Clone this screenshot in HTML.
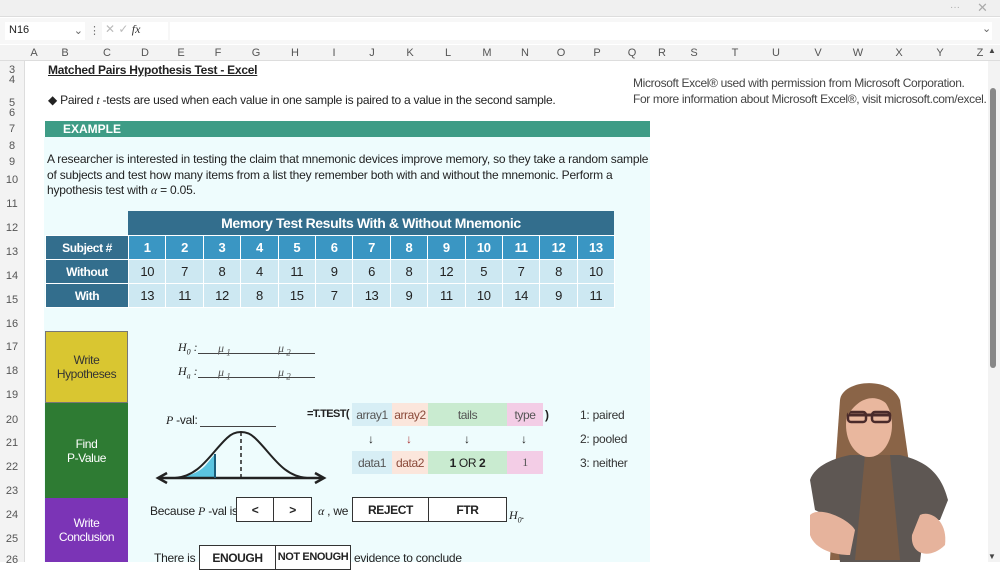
<!DOCTYPE html>
<html><head><meta charset="utf-8"><style>
*{margin:0;padding:0;box-sizing:border-box}
body{width:1000px;height:562px;overflow:hidden;background:#fff;font-family:"Liberation Sans Narrow","Liberation Sans",Arial,sans-serif;position:relative;color:#222}
.a{position:absolute;white-space:nowrap}
.n{letter-spacing:-0.25px}
.rn{position:absolute;left:0;width:24px;text-align:center;font-size:11px;color:#555}
.ch{position:absolute;top:47px;font-size:11px;color:#555;transform:translateX(-50%)}
.c{position:absolute;display:flex;align-items:center;justify-content:center;text-align:center;white-space:nowrap;letter-spacing:-0.4px}
.tb{table-layout:fixed}
.tb td{border:1px solid #fff;text-align:center;font-size:13px;letter-spacing:-0.4px;overflow:hidden}
</style></head><body>
<div class="a" style="left:0;top:0;width:1000px;height:17px;background:#f0f0f0;border-bottom:1px solid #ddd"></div>
<div class="a" style="left:950px;top:2px;font-size:10px;color:#aaa">···</div>
<div class="a" style="left:977px;top:0px;font-size:13px;color:#aaa">✕</div>
<div class="a" style="left:0;top:18px;width:1000px;height:26px;background:#f7f7f7"></div>
<div class="a" style="left:5px;top:22px;width:80px;height:18px;background:#fff;font-size:11px;padding:2px 4px">N16<span style="position:absolute;right:2px;color:#666">⌄</span></div>
<div class="a" style="left:89px;top:24px;font-size:11px;color:#777">⋮</div>
<div class="a" style="left:102px;top:22px;width:66px;height:18px;background:#fff;font-size:12px;color:#bbb;padding-left:3px">✕ ✓ <i style="font-family:'Liberation Serif';color:#333">fx</i></div>
<div class="a" style="left:170px;top:22px;width:822px;height:18px;background:#fff"></div>
<div class="a" style="left:982px;top:22px;font-size:11px;color:#666">⌄</div>
<div class="a" style="left:0;top:45px;width:1000px;height:16px;background:#f3f3f3;border-bottom:1px solid #ddd"></div>
<div class="a" style="left:0;top:61px;width:25px;height:501px;background:#f3f3f3;border-right:1px solid #ddd"></div>
<div class="ch" style="left:34px">A</div><div class="ch" style="left:65px">B</div><div class="ch" style="left:107px">C</div><div class="ch" style="left:145px">D</div><div class="ch" style="left:181px">E</div><div class="ch" style="left:218px">F</div><div class="ch" style="left:256px">G</div><div class="ch" style="left:295px">H</div><div class="ch" style="left:334px">I</div><div class="ch" style="left:372px">J</div><div class="ch" style="left:410px">K</div><div class="ch" style="left:448px">L</div><div class="ch" style="left:487px">M</div><div class="ch" style="left:525px">N</div><div class="ch" style="left:561px">O</div><div class="ch" style="left:597px">P</div><div class="ch" style="left:632px">Q</div><div class="ch" style="left:662px">R</div><div class="ch" style="left:694px">S</div><div class="ch" style="left:735px">T</div><div class="ch" style="left:776px">U</div><div class="ch" style="left:818px">V</div><div class="ch" style="left:858px">W</div><div class="ch" style="left:899px">X</div><div class="ch" style="left:940px">Y</div><div class="ch" style="left:980px">Z</div>
<div class="rn" style="top:64px">3</div><div class="rn" style="top:74px">4</div><div class="rn" style="top:97px">5</div><div class="rn" style="top:107px">6</div><div class="rn" style="top:123px">7</div><div class="rn" style="top:140px">8</div><div class="rn" style="top:156px">9</div><div class="rn" style="top:174px">10</div><div class="rn" style="top:198px">11</div><div class="rn" style="top:222px">12</div><div class="rn" style="top:246px">13</div><div class="rn" style="top:270px">14</div><div class="rn" style="top:294px">15</div><div class="rn" style="top:318px">16</div><div class="rn" style="top:341px">17</div><div class="rn" style="top:365px">18</div><div class="rn" style="top:389px">19</div><div class="rn" style="top:414px">20</div><div class="rn" style="top:437px">21</div><div class="rn" style="top:461px">22</div><div class="rn" style="top:485px">23</div><div class="rn" style="top:509px">24</div><div class="rn" style="top:533px">25</div><div class="rn" style="top:554px">26</div>
<div class="a" style="left:988px;top:61px;width:12px;height:501px;background:#f3f3f3"></div>
<div class="a" style="left:990px;top:88px;width:6px;height:280px;background:#888;border-radius:3px"></div>
<div class="a" style="left:988px;top:46px;font-size:8px;color:#444">▲</div>
<div class="a" style="left:988px;top:552px;font-size:8px;color:#444">▼</div>

<div class="a n" style="left:48px;top:63px;font-size:12px;font-weight:bold;text-decoration:underline">Matched Pairs Hypothesis Test - Excel</div>
<div class="a n" style="left:48px;top:93px;font-size:12px">◆ Paired <i style="font-family:'Liberation Serif'">t</i> -tests are used when each value in one sample is paired to a value in the second sample.</div>
<div class="a" style="left:633px;top:75px;font-size:12px;color:#444;line-height:16px;letter-spacing:-0.35px">Microsoft Excel® used with permission from Microsoft Corporation.<br>For more information about Microsoft Excel®, visit microsoft.com/excel.</div>
<div class="a" style="left:45px;top:121px;width:605px;height:16px;background:#3e9c86;color:#fff;font-weight:bold;font-size:12px;padding-left:18px;line-height:16px">EXAMPLE</div>
<div class="a" style="left:44px;top:137px;width:606px;height:425px;background:#eefcfd"></div>
<div class="a" style="left:47px;top:152px;font-size:12px;line-height:15.5px;letter-spacing:-0.2px">A researcher is interested in testing the claim that mnemonic devices improve memory, so they take a random sample<br>of subjects and test how many items from a list they remember both with and without the mnemonic. Perform a<br>hypothesis test with <i style="font-family:'Liberation Serif'">α</i> = 0.05.</div>

<div class="c" style="left:128px;top:211px;width:486px;height:24px;background:#336e8d;color:#fff;font-weight:bold;font-size:14px">Memory Test Results With &amp; Without Mnemonic</div>
<table class="tb a" style="left:45px;top:235px;border-collapse:collapse;width:570px">
<colgroup><col style="width:83px"><col span="13" style="width:37.4px"></colgroup>
<tr style="height:24px;color:#fff;font-weight:bold;font-size:15px"><td style="background:#336e8d;font-size:12px">Subject #</td><td style="background:#3a96c3">1</td><td style="background:#3a96c3">2</td><td style="background:#3a96c3">3</td><td style="background:#3a96c3">4</td><td style="background:#3a96c3">5</td><td style="background:#3a96c3">6</td><td style="background:#3a96c3">7</td><td style="background:#3a96c3">8</td><td style="background:#3a96c3">9</td><td style="background:#3a96c3">10</td><td style="background:#3a96c3">11</td><td style="background:#3a96c3">12</td><td style="background:#3a96c3">13</td></tr>
<tr style="height:24px;background:#cde8f2"><td style="background:#336e8d;color:#fff;font-weight:bold;font-size:12px">Without</td><td>10</td><td>7</td><td>8</td><td>4</td><td>11</td><td>9</td><td>6</td><td>8</td><td>12</td><td>5</td><td>7</td><td>8</td><td>10</td></tr>
<tr style="height:24px;background:#cde8f2"><td style="background:#336e8d;color:#fff;font-weight:bold;font-size:12px">With</td><td>13</td><td>11</td><td>12</td><td>8</td><td>15</td><td>7</td><td>13</td><td>9</td><td>11</td><td>10</td><td>14</td><td>9</td><td>11</td></tr>
</table>

<div class="c" style="left:45px;top:331px;width:83px;height:72px;background:#d9c631;font-size:12px;color:#333;border:1px solid #777;white-space:normal">Write<br>Hypotheses</div>
<div class="c" style="left:45px;top:403px;width:83px;height:95px;background:#2e7b33;font-size:12px;color:#fff;white-space:normal">Find<br>P-Value</div>
<div class="c" style="left:45px;top:498px;width:83px;height:64px;background:#7b34b6;font-size:12px;color:#fff;white-space:normal">Write<br>Conclusion</div>

<div class="a" style="left:178px;top:340px;font-size:12px;font-family:'Liberation Serif';font-style:italic">H<sub style="font-size:8px">0</sub> :</div>
<div class="a" style="left:198px;top:353px;width:117px;border-top:1px solid #444"></div>
<div class="a" style="left:218px;top:341px;font-size:12px;font-family:'Liberation Serif';font-style:italic;color:#555">μ<sub style="font-size:9px"> 1</sub></div>
<div class="a" style="left:278px;top:341px;font-size:12px;font-family:'Liberation Serif';font-style:italic;color:#555">μ<sub style="font-size:9px"> 2</sub></div>
<div class="a" style="left:178px;top:364px;font-size:12px;font-family:'Liberation Serif';font-style:italic">H<sub style="font-size:8px">a</sub> :</div>
<div class="a" style="left:198px;top:377px;width:117px;border-top:1px solid #444"></div>
<div class="a" style="left:218px;top:365px;font-size:12px;font-family:'Liberation Serif';font-style:italic;color:#555">μ<sub style="font-size:9px"> 1</sub></div>
<div class="a" style="left:278px;top:365px;font-size:12px;font-family:'Liberation Serif';font-style:italic;color:#555">μ<sub style="font-size:9px"> 2</sub></div>

<div class="a n" style="left:166px;top:413px;font-size:12px"><i style="font-family:'Liberation Serif'">P</i> -val:</div>
<div class="a" style="left:200px;top:426px;width:76px;border-top:1px solid #444"></div>
<svg class="a" style="left:155px;top:428px" width="172" height="60" viewBox="0 0 172 60">
<path d="M20 50 Q40 48 50 38 L60 26 L60 50 Z" fill="#5bc4e0"/>
<path d="M5 50 H167" stroke="#222" stroke-width="2.5"/>
<path d="M12 45 L3 50 L12 55" fill="none" stroke="#222" stroke-width="2.5"/>
<path d="M160 45 L169 50 L160 55" fill="none" stroke="#222" stroke-width="2.5"/>
<path d="M20 50 C45 48 55 26 72 10 C80 2 92 2 100 10 C117 26 127 48 152 50" fill="none" stroke="#222" stroke-width="2"/>
<path d="M60 26 V50" stroke="#1b5c7a" stroke-width="2"/>
<path d="M86 4 V50" stroke="#222" stroke-width="1.5" stroke-dasharray="4,3"/>
</svg>

<div class="a" style="left:307px;top:408px;font-size:11px;font-weight:bold;letter-spacing:-0.6px">=T.TEST(</div>
<div class="c" style="left:352px;top:403px;width:40px;height:23px;background:#d7eef5;font-size:12px;color:#555">array1</div>
<div class="c" style="left:392px;top:403px;width:36px;height:23px;background:#fbe6dc;font-size:12px;color:#8a4a3a">array2</div>
<div class="c" style="left:428px;top:403px;width:79px;height:23px;background:#c9ebd0;font-size:12px;color:#555">tails</div>
<div class="c" style="left:507px;top:403px;width:36px;height:23px;background:#f3cde6;font-size:12px;color:#555">type</div>
<div class="a" style="left:545px;top:408px;font-size:12px;font-weight:bold">)</div>
<div class="a" style="left:368px;top:432px;font-size:12px">↓</div><div class="a" style="left:406px;top:432px;font-size:12px;color:#a33">↓</div><div class="a" style="left:464px;top:432px;font-size:12px">↓</div><div class="a" style="left:521px;top:432px;font-size:12px">↓</div>
<div class="c" style="left:352px;top:451px;width:40px;height:23px;background:#d7eef5;font-size:12px;color:#555">data1</div>
<div class="c" style="left:392px;top:451px;width:36px;height:23px;background:#fbe6dc;font-size:12px;color:#8a4a3a">data2</div>
<div class="c" style="left:428px;top:451px;width:79px;height:23px;background:#c9ebd0;font-size:12px"><b>1</b>&nbsp;OR&nbsp;<b>2</b></div>
<div class="c" style="left:507px;top:451px;width:36px;height:23px;background:#f3cde6;font-size:12px;font-family:'Liberation Serif';color:#555">1</div>
<div class="a n" style="left:580px;top:403px;font-size:12px;color:#333;line-height:24px">1: paired<br>2: pooled<br>3: neither</div>

<div class="a n" style="left:150px;top:504px;font-size:12px">Because <i style="font-family:'Liberation Serif'">P</i> -val is</div>
<div class="c" style="left:236px;top:497px;width:38px;height:25px;border:1px solid #333;background:#fff;font-weight:bold;font-size:12px">&lt;</div>
<div class="c" style="left:273px;top:497px;width:39px;height:25px;border:1px solid #333;background:#fff;font-weight:bold;font-size:12px">&gt;</div>
<div class="a n" style="left:318px;top:504px;font-size:12px"><i style="font-family:'Liberation Serif'">α</i> , we</div>
<div class="c" style="left:352px;top:497px;width:77px;height:25px;border:1px solid #333;background:#fff;font-weight:bold;font-size:12px">REJECT</div>
<div class="c" style="left:428px;top:497px;width:79px;height:25px;border:1px solid #333;background:#fff;font-weight:bold;font-size:12px">FTR</div>
<div class="a" style="left:509px;top:508px;font-size:12px;font-family:'Liberation Serif';font-style:italic">H<sub style="font-size:8px">0</sub>.</div>
<div class="a n" style="left:154px;top:551px;font-size:12px">There is</div>
<div class="c" style="left:199px;top:545px;width:77px;height:25px;border:1px solid #333;background:#fff;font-weight:bold;font-size:12px;align-items:flex-start;padding-top:5px">ENOUGH</div>
<div class="c" style="left:275px;top:545px;width:76px;height:25px;border:1px solid #333;background:#fff;font-weight:bold;font-size:11px;align-items:flex-start;padding-top:5px">NOT ENOUGH</div>
<div class="a n" style="left:354px;top:551px;font-size:12px">evidence to conclude</div>

<svg class="a" style="left:780px;top:370px" width="208" height="192" viewBox="0 0 208 192">
<path d="M60 30 C62 10 110 5 120 30 L130 100 L140 190 L50 190 L55 100 Z" fill="#8a6447"/>
<path d="M30 110 C35 95 55 88 70 85 L120 85 C140 90 160 98 168 130 L160 150 L145 150 L140 192 L60 192 L55 150 L35 140 Z" fill="#5e5753"/>
<path d="M85 85 L110 85 L120 190 L75 190 Z" fill="#7e5c42" opacity=".8"/>
<ellipse cx="89" cy="55" rx="23" ry="32" fill="#e9b79e"/>
<path d="M68 45 H110" stroke="#4a2a2a" stroke-width="3"/>
<rect x="68" y="42" width="18" height="10" rx="3" fill="none" stroke="#4a2a2a" stroke-width="2.5"/>
<rect x="92" y="42" width="18" height="10" rx="3" fill="none" stroke="#4a2a2a" stroke-width="2.5"/>
<path d="M66 30 C70 15 105 12 112 30 L114 50 L112 40 C100 22 80 25 68 45 Z" fill="#8a6447"/>
<path d="M30 145 C40 135 70 150 75 160 L70 185 C55 185 35 180 30 165 Z" fill="#e6b39c"/>
<path d="M140 145 C150 140 168 150 165 175 C150 190 130 185 132 165 Z" fill="#e6b39c"/>
</svg>
</body></html>
